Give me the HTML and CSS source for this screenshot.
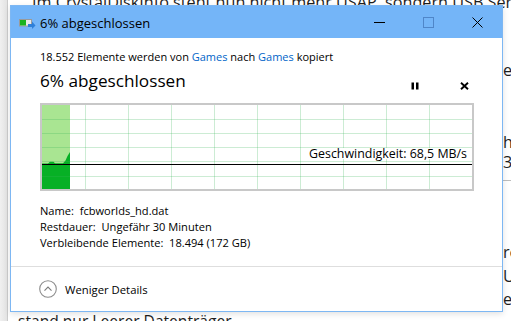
FILE: index.html
```html
<!DOCTYPE html>
<html lang="de">
<head>
<meta charset="utf-8">
<title>Kopieren</title>
<link rel="stylesheet" href="styles.css">
</head>
<body>
<div class="page">
  <div class="gutter"></div>
  <div class="article">
    <p class="line line-top">Im CrystalDiskInfo steht nun nicht mehr USAP, sondern USB Serial</p>
    <div class="peek">
      <span class="pk pk-er">er</span>
      <span class="pk pk-h">h</span>
      <span class="pk pk-3">3</span>
      <div class="pk-rule"></div>
      <span class="pk pk-re">re</span>
      <span class="pk pk-u">U</span>
      <span class="pk pk-e">e</span>
    </div>
    <p class="line line-bottom">stand nur Leerer Datenträger</p>
  </div>
</div>

<div class="dialog">
  <div class="titlebar">
    <svg class="app-icon" width="17" height="10" viewBox="0 0 17 10">
      <rect x="0.5" y="0.5" width="12" height="6.5" fill="#e9e9e9" stroke="#9a9a9a"/>
      <rect x="1" y="1" width="6" height="5.5" fill="#18b31f"/>
      <rect x="9" y="5" width="4.5" height="3" fill="#2f80d9"/>
      <polygon points="13,2.5 16.5,6.5 13,10" fill="#2f80d9"/>
    </svg>
    <span class="title">6% abgeschlossen</span>
    <div class="wbtns">
      <span class="wbtn"><svg width="11" height="11" viewBox="0 0 11 11"><line x1="0" y1="5.5" x2="11" y2="5.5" stroke="#000" stroke-width="1"/></svg></span>
      <span class="wbtn"><svg width="11" height="11" viewBox="0 0 11 11"><rect x="0.5" y="0.5" width="10" height="10" fill="none" stroke="#4f86c9" stroke-width="1"/></svg></span>
      <span class="wbtn"><svg width="11" height="11" viewBox="0 0 11 11"><path d="M0.5 0.5 L10.5 10.5 M10.5 0.5 L0.5 10.5" stroke="#000" stroke-width="1"/></svg></span>
    </div>
  </div>

  <div class="main">
    <p class="summary">18.552 Elemente werden von <a class="loc">Games</a> nach <a class="loc">Games</a> kopiert</p>
    <div class="headrow">
      <h1 class="progress">6% abgeschlossen</h1>
      <div class="controls">
        <span class="ctl"><svg width="8" height="8" viewBox="0 0 8 8"><rect x="0.5" y="0.5" width="2.5" height="7" fill="#000"/><rect x="5" y="0.5" width="2.5" height="7" fill="#000"/></svg></span>
        <span class="ctl"><svg width="9" height="8" viewBox="0 0 9 8"><path d="M1 0.8 L8 7.2 M8 0.8 L1 7.2" stroke="#000" stroke-width="1.9"/></svg></span>
      </div>
    </div>

    <div class="graph">
      <svg class="chart" width="430" height="84" viewBox="0 0 430 84">
        <rect x="0" y="0" width="28" height="84" fill="#a9e592"/>
        <polygon points="0,58.5 6,58.5 8,56.8 11.5,56.8 13,58.3 21,58.3 23.5,55.5 25.5,51 28,47 28,84 0,84" fill="#07b025"/>
        <g stroke="#3bb45a" stroke-opacity="0.26" stroke-width="1">
          <line x1="43.5" y1="0" x2="43.5" y2="84"/>
          <line x1="86.5" y1="0" x2="86.5" y2="84"/>
          <line x1="129.5" y1="0" x2="129.5" y2="84"/>
          <line x1="172.5" y1="0" x2="172.5" y2="84"/>
          <line x1="215.5" y1="0" x2="215.5" y2="84"/>
          <line x1="258.5" y1="0" x2="258.5" y2="84"/>
          <line x1="301.5" y1="0" x2="301.5" y2="84"/>
          <line x1="344.5" y1="0" x2="344.5" y2="84"/>
          <line x1="387.5" y1="0" x2="387.5" y2="84"/>
          <line x1="0" y1="14.5" x2="430" y2="14.5"/>
          <line x1="0" y1="28.5" x2="430" y2="28.5"/>
          <line x1="0" y1="42.5" x2="430" y2="42.5"/>
          <line x1="0" y1="56.5" x2="430" y2="56.5"/>
          <line x1="0" y1="71.5" x2="430" y2="71.5"/>
        </g>
        <line x1="0" y1="59.5" x2="430" y2="59.5" stroke="#000" stroke-width="1.2"/>
      </svg>
      <span class="speed">Geschwindigkeit: 68,5 MB/s</span>
    </div>

    <div class="details">
      <div class="drow">Name:  fcbworlds_hd.dat</div>
      <div class="drow">Restdauer:  Ungefähr 30 Minuten</div>
      <div class="drow">Verbleibende Elemente:  18.494 (172 GB)</div>
    </div>
  </div>

  <div class="footer">
    <span class="chev"><svg width="18" height="18" viewBox="0 0 18 18"><circle cx="9" cy="9" r="8.3" fill="none" stroke="#8c8c8c" stroke-width="1.1"/><path d="M5.5 10.6 L9 7 L12.5 10.6" fill="none" stroke="#7a7a7a" stroke-width="1.1"/></svg></span>
    <span class="toggle">Weniger Details</span>
  </div>
</div>
</body>
</html>
```

FILE: styles.css
```css
html, body {
  margin: 0;
  padding: 0;
  overflow: hidden;
}

body {
  width: 511px;
  height: 321px;
  background: #fff;
  font-family: "Open Sans", "Noto Sans", sans-serif;
  position: relative;
}

/* background web page */
.page {
  display: flex;
  height: 321px;
}

.gutter {
  flex: none;
  width: 7px;
  background: linear-gradient(to right, #f0f0f0, #e3e3e3);
  border-right: 1px solid #cbcbcb;
}

.article {
  flex: 1;
  min-width: 0;
  overflow: hidden;
  color: #1e1e1e;
  font-size: 16.2px;
}

.line {
  margin: 0;
  white-space: nowrap;
  line-height: 20px;
}

.line-top {
  margin-top: -8px;
  padding-left: 24px;
}

.line-bottom {
  margin-top: 2px;
  padding-left: 10px;
  font-size: 15.6px;
}

.peek {
  display: flex;
  flex-direction: column;
  margin-left: 495px;
  white-space: nowrap;
  overflow: hidden;
}

.pk {
  display: block;
  line-height: 20px;
}

.pk-er { margin-top: 48px; }
.pk-h { margin-top: 52px; }
.pk-3 { margin-top: 0; }
.pk-rule { margin-top: 8px; height: 1px; background: #bdbdbd; }
.pk-re { margin-top: 61px; }
.pk-u { margin-top: 4px; }
.pk-e { margin-top: 3px; }

/* copy dialog window */
.dialog {
  position: absolute;
  left: 10px;
  top: 5px;
  width: 493px;
  height: 307px;
  box-sizing: border-box;
  border: 1px solid #7db7f3;
  background: #fff;
  display: flex;
  flex-direction: column;
  box-shadow: 0 2px 6px rgba(0, 0, 0, 0.12);
  color: #000;
}

.titlebar {
  flex: none;
  height: 32px;
  background: #74b5f8;
  display: flex;
  align-items: center;
}

.app-icon {
  flex: none;
  margin-left: 8px;
  margin-top: 3px;
}

.title {
  margin-left: 4px;
  font-size: 13px;
  margin-top: 2px;
}

.wbtns {
  margin-left: auto;
  display: flex;
  height: 100%;
}

.wbtn {
  width: 49px;
  display: flex;
  align-items: center;
  justify-content: center;
}

.main {
  flex: 1;
  padding: 11px 28px 0 29px;
  display: flex;
  flex-direction: column;
}

.summary {
  margin: 0;
  font-size: 11px;
  line-height: 16px;
}

.loc {
  color: #0064c8;
}

.headrow {
  margin-top: 3.5px;
  display: flex;
  align-items: flex-end;
  height: 24px;
}

.progress {
  margin: 0;
  font-weight: normal;
  font-size: 17.2px;
  line-height: 24px;
}

.controls {
  margin-left: auto;
  display: flex;
  gap: 29px;
  margin-bottom: 3px;
}

.ctl {
  width: 20px;
  height: 8px;
  display: flex;
  justify-content: center;
}

.graph {
  margin-top: 10.5px;
  position: relative;
  width: 430px;
  height: 84px;
  border: 2px solid #c8c8c8;
}

.chart {
  display: block;
}

.speed {
  position: absolute;
  right: 5px;
  top: 43px;
  font-size: 12.4px;
  line-height: 11px;
  background: #fff;
  padding-left: 2px;
}

.details {
  margin-top: 12px;
  font-size: 11.1px;
  line-height: 16px;
}

.drow {
  white-space: pre;
}

.footer {
  flex: none;
  height: 44px;
  border-top: 1px solid #dedede;
  display: flex;
  align-items: center;
  padding-left: 28px;
}

.chev {
  display: flex;
  width: 18px;
  height: 18px;
}

.toggle {
  margin-left: 8px;
  font-size: 11.3px;
}
```
